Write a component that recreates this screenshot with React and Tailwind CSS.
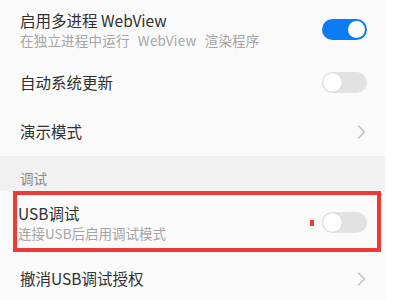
import React from "react";

const font = { fontFamily: '"Noto Sans CJK SC", "Noto Sans", sans-serif' };

function Toggle({ on }) {
  return on ? (
    <div className="w-[45px] h-[21px] rounded-full bg-[#0c7cf4] flex items-center justify-end pr-[2px]">
      <div className="w-[17px] h-[17px] rounded-full bg-white" />
    </div>
  ) : (
    <div className="w-[45px] h-[21px] rounded-full bg-[#e2e2e2] flex items-center pl-[1px]">
      <div className="w-[19px] h-[19px] rounded-full bg-white shadow-[0_0_1px_rgba(0,0,0,0.25)]" />
    </div>
  );
}

function Chevron() {
  return (
    <svg width="9" height="14" viewBox="0 0 9 14" className="mr-[1px]">
      <polyline points="1.5,1 7.5,7 1.5,13" fill="none" stroke="#c4c4c4" strokeWidth="1.6" strokeLinecap="round" strokeLinejoin="round" />
    </svg>
  );
}

export default function App() {
  return (
    <div className="w-[400px] h-[300px] overflow-hidden flex bg-white" style={font}>
      <div className="w-[385px] bg-[#fafafa] flex flex-col">
        {/* Row 1 */}
        <div className="h-[58px] shrink-0 pl-[20px] pr-[18px] flex items-center">
          <div className="flex-1 flex flex-col pt-[1px]">
            <div className="text-[15.5px] leading-[20px] text-[#303030]">启用多进程 WebView</div>
            <div className="text-[13.5px] leading-[18px] mt-[1px] text-[#a5a5a5] [word-spacing:5px] tracking-[0.2px]">在独立进程中运行 WebView 渲染程序</div>
          </div>
          <Toggle on />
        </div>
        <div className="ml-[20px] mr-[15px] h-px bg-[#ececec]" />
        {/* Row 2 */}
        <div className="h-[49px] shrink-0 pl-[20px] pr-[18px] flex items-center">
          <div className="flex-1 text-[15.5px] text-[#303030] pt-[1px]">自动系统更新</div>
          <Toggle />
        </div>
        <div className="ml-[20px] mr-[14px] h-px bg-[#ececec]" />
        {/* Row 3 */}
        <div className="h-[49px] shrink-0 pl-[20px] pr-[18px] flex items-center">
          <div className="flex-1 text-[15.5px] text-[#303030] pt-[1px]">演示模式</div>
          <Chevron />
        </div>
        {/* Section header */}
        <div className="h-[35px] shrink-0 bg-[#f1f1f1] pl-[20px] flex items-end pb-[3px]">
          <div className="text-[13.5px] text-[#8a8a8a]">调试</div>
        </div>
        {/* USB row */}
        <div className="relative h-[62px] shrink-0 pl-[18px] pr-[18px] flex items-center">
          <div className="flex-1 flex flex-col pt-[1px]">
            <div className="text-[15.5px] leading-[20px] text-[#303030]">USB调试</div>
            <div className="text-[13.5px] leading-[18px] mt-[1px] text-[#a5a5a5]">连接USB后启用调试模式</div>
          </div>
          <div className="w-[4px] h-[6px] bg-[#ee3b3b] mr-[8px] mt-[1px]" />
          <Toggle />
          <div className="absolute left-[13px] top-0 w-[368px] h-[61px] border-[4px] border-[#ef3a3a]" />
        </div>
        {/* Last row */}
        <div className="h-[52px] shrink-0 pl-[20px] pr-[18px] flex items-center">
          <div className="flex-1 text-[15.5px] text-[#303030]">撤消USB调试授权</div>
          <Chevron />
        </div>
      </div>
      <div className="flex-1 bg-white" />
    </div>
  );
}
